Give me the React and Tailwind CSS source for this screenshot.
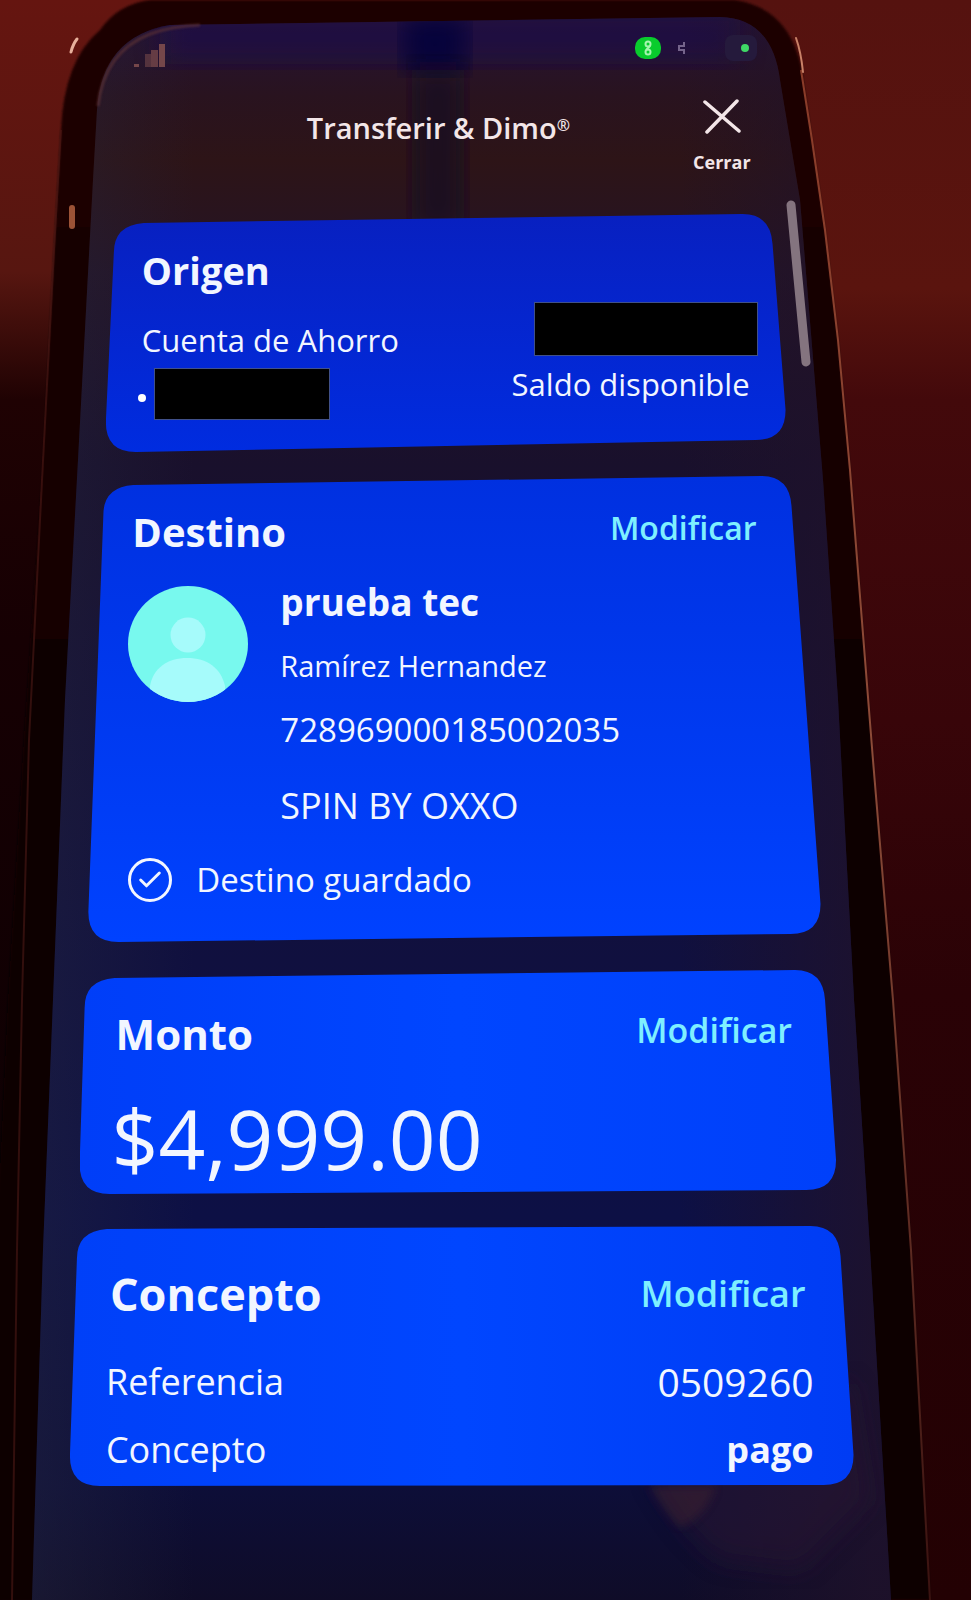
import { Check } from 'lucide-react';

const DETAILS = [
    { label: 'Referencia', value: '0509260', style: 'text-[39px]' },
    { label: 'Concepto', value: 'pago', style: 'text-[36px] font-bold' },
];

// Phone body, screen glass and the light around it
const PhoneBackdrop = () => (
    <svg
        className="absolute inset-0 -z-10 h-full w-full"
        viewBox="0 0 971 1600"
        preserveAspectRatio="none"
        aria-hidden="true"
    >
        <defs>
            <linearGradient id="wallLeft" x1="0" y1="0" x2="0" y2="1">
                <stop offset="0" stopColor="#651510" />
                <stop offset="0.17" stopColor="#571610" />
                <stop offset="0.25" stopColor="#1f0203" />
                <stop offset="0.4" stopColor="#160003" />
                <stop offset="1" stopColor="#080002" />
            </linearGradient>
            <linearGradient id="wallRight" x1="0" y1="0" x2="0" y2="1">
                <stop offset="0" stopColor="#55120f" />
                <stop offset="0.18" stopColor="#5a140e" />
                <stop offset="0.25" stopColor="#43090b" />
                <stop offset="0.45" stopColor="#380509" />
                <stop offset="0.62" stopColor="#2a0206" />
                <stop offset="1" stopColor="#230103" />
            </linearGradient>
            <linearGradient id="body" x1="0" y1="0" x2="0" y2="1">
                <stop offset="0" stopColor="#1e0202" />
                <stop offset="0.3" stopColor="#150204" />
                <stop offset="0.7" stopColor="#080104" />
                <stop offset="1" stopColor="#0a0203" />
            </linearGradient>
            <linearGradient id="glass" x1="0" y1="0" x2="0" y2="1">
                <stop offset="0" stopColor="#24123a" />
                <stop offset="0.06" stopColor="#29131f" />
                <stop offset="0.1" stopColor="#2d1417" />
                <stop offset="0.17" stopColor="#241426" />
                <stop offset="0.29" stopColor="#19102c" />
                <stop offset="0.6" stopColor="#10103f" />
                <stop offset="0.76" stopColor="#0d1045" />
                <stop offset="0.93" stopColor="#0d0e38" />
                <stop offset="1" stopColor="#0f0c28" />
            </linearGradient>
            <linearGradient id="glassSide" x1="0" y1="0" x2="1" y2="0">
                <stop offset="0" stopColor="#262840" stopOpacity="0.5" />
                <stop offset="0.2" stopColor="#262840" stopOpacity="0" />
                <stop offset="0.7" stopColor="#20122a" stopOpacity="0" />
                <stop offset="0.9" stopColor="#20122a" stopOpacity="0.8" />
            </linearGradient>
            <linearGradient id="rim" x1="0" y1="0" x2="0" y2="1">
                <stop offset="0" stopColor="#8a3b28" />
                <stop offset="0.45" stopColor="#8c4b38" />
                <stop offset="1" stopColor="#3a1210" />
            </linearGradient>
            <filter id="soft4"><feGaussianBlur stdDeviation="4" /></filter>
            <filter id="soft12"><feGaussianBlur stdDeviation="12" /></filter>
            <filter id="soft1"><feGaussianBlur stdDeviation="1" /></filter>
            <clipPath id="screen">
                <path d="M32 1600 L43 1250 L53 1000 L65 700 L78 460 L93 180 L97 110 Q102 36 170 25 L720 17 Q772 18 780 80 L800 200 L823 480 L838 700 L854 1000 L870 1250 L891 1600 Z" />
            </clipPath>
        </defs>
        <rect width="500" height="1600" fill="url(#wallLeft)" />
        <rect x="500" width="471" height="1600" fill="url(#wallRight)" />

        <path
            d="M-6 1600 L-4 1250 L8 1000 L24 740 L42 480 L54 250 L61 130 Q64 60 100 30 Q118 4 150 0 L735 0 Q788 8 801 66 L812 140 L825 230 L838 340 L850 470 L873 760 L893 1000 L911 1250 L930 1600 Z"
            fill="url(#body)"
            filter="url(#soft1)"
        />
        <path d="M801 70 L812 140 L825 230 L838 340 L850 470 L873 760 L893 1000 L911 1250 L930 1600" fill="none" stroke="url(#rim)" strokeWidth="2" />
        <path d="M12 1600 L17 1250 L22 1000 L29 740 L42 480 L54 250 L61 130" fill="none" stroke="#4d1915" strokeWidth="2" opacity="0.6" />
        <path d="M71 52 Q73 44 77 39" fill="none" stroke="#e8b09c" strokeWidth="3" strokeLinecap="round" />
        <path d="M796 38 Q801 52 803 72" fill="none" stroke="#c98268" strokeWidth="2" strokeLinecap="round" />
        <rect x="69" y="205" width="6" height="24" rx="3" fill="#9c5236" />

        <g clipPath="url(#screen)">
            <rect width="971" height="1600" fill="url(#glass)" />
            <rect x="160" y="10" width="580" height="54" fill="#1c0f4c" opacity="0.6" filter="url(#soft12)" />
            <rect x="404" y="16" width="62" height="56" fill="#05003a" opacity="0.8" filter="url(#soft12)" />
            <rect x="412" y="70" width="52" height="160" fill="#180a20" opacity="0.7" filter="url(#soft12)" />
            <rect width="971" height="1600" fill="url(#glassSide)" />
            <path d="M650 1470 L850 1380 L870 1500 L800 1570 L720 1560 Q680 1530 650 1470" fill="#2a1730" opacity="0.5" filter="url(#soft12)" />
            <path d="M650 1486 Q664 1512 680 1528 Q706 1516 716 1486 Z" fill="#40202f" opacity="0.5" filter="url(#soft4)" />
        </g>
        <path d="M98 106 Q104 52 150 34 Q172 26 200 25" fill="none" stroke="#5b3136" strokeWidth="3" opacity="0.7" filter="url(#soft1)" />

        {/* scroll thumb */}
        <path d="M791 205 L806 362" stroke="#84747f" strokeWidth="9" strokeLinecap="round" />
    </svg>
);

const StatusBar = () => (
    <div className="ml-[13.8%] mr-[22%] flex h-12 items-center">
        <svg className="mt-4 h-6 w-8" viewBox="0 0 32 24" fill="#75474a" aria-label="Señal">
            <rect x="0" y="20" width="5" height="3" />
            <rect x="11" y="10" width="6" height="13" opacity="0.6" />
            <rect x="17" y="6" width="7" height="17" opacity="0.8" />
            <rect x="25" y="0" width="6" height="23" />
        </svg>
        <span className="ml-auto flex h-[22px] w-[26px] items-center justify-center rounded-[10px] bg-[#09cc2d]">
            <svg className="h-4 w-3" viewBox="0 0 12 16" fill="none" stroke="#a5f5ae" strokeWidth="2" aria-hidden="true">
                <circle cx="6" cy="4" r="2.5" />
                <path d="M8 6L4 10" />
                <circle cx="6" cy="12" r="2.5" />
            </svg>
        </span>
        <svg className="ml-4 h-3 w-2" viewBox="0 0 8 12" fill="none" stroke="#75648b" strokeWidth="2" aria-hidden="true">
            <path d="M7 0V4H2V8H7V12" />
        </svg>
        <span className="ml-10 flex h-[26px] w-8 items-center justify-end rounded-lg bg-[#251a3c] pr-2">
            <span className="h-2 w-2 rounded-full bg-[#3fd866]" />
        </span>
    </div>
);

// Each card sets --dl/--dr (side lean) and --tt/--tb (top and bottom tilt)
const Card = ({ className, children }) => (
    <section
        className={`relative isolate flex flex-col before:absolute before:inset-0 before:-z-10 before:[clip-path:shape(from_var(--dl)_calc(var(--tt)+30px),curve_to_calc(var(--dl)+30px)_var(--tt)_with_var(--dl)_calc(var(--tt)+2px),line_to_calc(100%-var(--dr)-30px)_0px,curve_to_calc(100%-var(--dr))_30px_with_calc(100%-var(--dr)-2px)_0px,line_to_100%_calc(100%-var(--tb)-30px),curve_to_calc(100%-30px)_calc(100%-var(--tb))_with_100%_calc(100%-var(--tb)),line_to_30px_100%,curve_to_0px_calc(100%-30px)_with_0px_100%,close)] ${className}`}
    >
        {children}
    </section>
);

const CardHeader = ({ title, size, linkSize }) => (
    <div className="flex items-start justify-between pl-1 pr-2">
        <h2 className={`${size} font-bold leading-10`}>{title}</h2>
        {linkSize && (
            <button type="button" className={`${linkSize} font-semibold text-[#7eefff]`}>
                Modificar
            </button>
        )}
    </div>
);

const Avatar = () => (
    <svg className="mt-1 h-[116px] w-[120px] shrink-0" viewBox="0 0 120 116" preserveAspectRatio="none" aria-hidden="true">
        <defs>
            <clipPath id="avatarClip"><ellipse cx="60" cy="58" rx="60" ry="58" /></clipPath>
        </defs>
        <g clipPath="url(#avatarClip)">
            <rect width="120" height="116" fill="#78f9ee" />
            <circle cx="60" cy="49" r="17.5" fill="#a6fbfb" />
            <path d="M22 116 V100 C25 82 40 72 59 72 C79 72 93 82 97 100 V116 Z" fill="#a6fbfb" />
        </g>
    </svg>
);

const App = () => {
    return (
        <main className="relative isolate min-h-screen overflow-hidden bg-black pb-28 pt-6 font-['Open_Sans',sans-serif] text-[#f2f6ff]">
            <PhoneBackdrop />
            <StatusBar />

            <header className="ml-[31.6%] mr-[22.7%] flex items-start justify-between pt-[26px] text-[#f3e6e8]">
                <h1 className="pt-3 text-[29px] font-semibold leading-9">
                    Transferir &amp; Dimo<sup className="text-base">®</sup>
                </h1>
                <button type="button" className="flex flex-col items-center gap-4">
                    <svg className="h-9 w-10" viewBox="0 0 40 36" fill="none" stroke="currentColor" strokeWidth="3.5" strokeLinecap="round" aria-hidden="true">
                        <path d="M3 4L37 33M35 3L5 34" />
                    </svg>
                    <span className="text-lg font-bold leading-6">Cerrar</span>
                </button>
            </header>

            <Card className="ml-[10.9%] mr-[19.1%] mt-10 pb-8 pl-8 pr-7 pt-9 [--dl:8px] [--dr:13px] [--tb:12px] [--tt:9px] before:bg-linear-to-b before:from-[#0820c0] before:to-[#002ce0]">
                <CardHeader title="Origen" size="text-[38px]" />
                <div className="mt-3 flex justify-between">
                    <div className="flex flex-col gap-2 pt-[18px]">
                        <p className="pl-1 text-[31px] font-medium leading-10">Cuenta de Ahorro</p>
                        <div className="flex items-center gap-2">
                            <span className="mt-2 h-2 w-2 rounded-full bg-white" />
                            <span className="h-[52px] w-44 border border-[#40508a] bg-black" />
                        </div>
                    </div>
                    <div className="flex flex-col items-end gap-2">
                        <span className="h-[54px] w-56 border border-[#40508a] bg-black" />
                        <p className="pr-2 text-[31px] leading-10">Saldo disponible</p>
                    </div>
                </div>
            </Card>

            <Card className="ml-[9.1%] mr-[15.5%] mt-6 pb-10 pl-10 pr-14 pt-9 [--dl:15px] [--dr:29px] [--tb:8px] [--tt:9px] before:bg-linear-to-b before:from-[#0030e0] before:to-[#0042ff]">
                <CardHeader title="Destino" size="text-[40px]" linkSize="text-[32px] leading-8" />
                <div className="mt-[30px] flex gap-8">
                    <Avatar />
                    <div>
                        <h3 className="text-[37px] font-bold leading-10">prueba tec</h3>
                        <p className="mt-6 text-[29px] leading-10">Ramírez Hernandez</p>
                        <p className="mt-6 text-[33px] leading-10">728969000185002035</p>
                        <p className="mt-9 text-[36px] leading-10">SPIN BY OXXO</p>
                    </div>
                </div>
                <div className="mt-8 flex items-center gap-6">
                    <span className="flex h-11 w-11 items-center justify-center rounded-full border-3 border-current">
                        <Check size={28} strokeWidth={2.5} />
                    </span>
                    <p className="text-[33px] leading-10">Destino guardado</p>
                </div>
            </Card>

            <Card className="ml-[8.2%] mr-[13.9%] mt-7 pb-4 pl-8 pr-9 pt-11 [--dl:5px] [--dr:11px] [--tb:4px] [--tt:8px] before:bg-linear-to-r before:from-[#003ef8] before:via-[#0046ff] before:to-[#0040fa]">
                <CardHeader title="Monto" size="text-[42px]" linkSize="text-[34px] leading-8" />
                <p className="mt-11 text-[82px] leading-20">$4,999.00</p>
            </Card>

            <Card className="ml-[7.2%] mr-[12.1%] mt-8 pb-4 pl-9 pr-10 pt-12 [--dl:7px] [--dr:13px] [--tb:1px] [--tt:3px] before:bg-linear-to-r before:from-[#0040f8] before:via-[#0046ff] before:to-[#003cf4]">
                <CardHeader title="Concepto" size="text-[45px]" linkSize="text-[36px] leading-10" />
                <dl className="mt-12 flex flex-col gap-7">
                    {DETAILS.map((item) => (
                        <div key={item.label} className="flex justify-between">
                            <dt className="text-[36px] leading-10">{item.label}</dt>
                            <dd className={`${item.style} leading-10`}>{item.value}</dd>
                        </div>
                    ))}
                </dl>
            </Card>
        </main>
    );
};

export default App;
